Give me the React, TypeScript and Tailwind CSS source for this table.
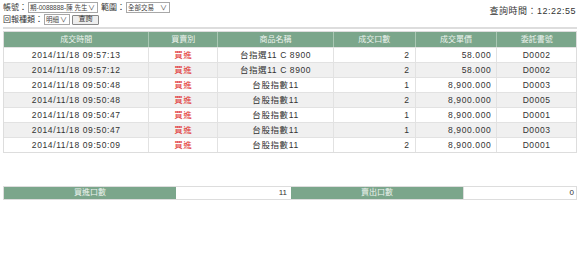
const rows = [
  ["2014/11/18 09:57:13", "買進", "台指選11 C 8900", "2", "58.000", "D0002"],
  ["2014/11/18 09:57:12", "買進", "台指選11 C 8900", "2", "58.000", "D0002"],
  ["2014/11/18 09:50:48", "買進", "台股指數11", "1", "8,900.000", "D0003"],
  ["2014/11/18 09:50:48", "買進", "台股指數11", "2", "8,900.000", "D0005"],
  ["2014/11/18 09:50:47", "買進", "台股指數11", "1", "8,900.000", "D0001"],
  ["2014/11/18 09:50:47", "買進", "台股指數11", "1", "8,900.000", "D0003"],
  ["2014/11/18 09:50:09", "買進", "台股指數11", "2", "8,900.000", "D0001"],
];

const heads = ["成交時間", "買賣別", "商品名稱", "成交口數", "成交單價", "委託書號"];
const widths = ["w-[145px]", "w-[69px]", "w-[116px]", "w-[82px]", "w-[82px]", "w-[80px]"];

function Sel({ text, w }: { text: string; w: string }) {
  return (
    <span className={`${w} h-[11px] border border-[#a8a8a8] bg-white flex items-center gap-[1px] pl-[1px] pr-[2px] text-[6.5px] text-[#444]`}>
      <span className="flex-1 min-w-0 whitespace-nowrap">{text}</span>
      <span className="text-[7px] leading-none">∨</span>
    </span>
  );
}

export default function App() {
  return (
    <div className="w-[580px] h-[254px] bg-white text-[#333] font-['Liberation_Sans','Noto_Sans_CJK_TC',sans-serif] text-[8px]">
      <div className="flex justify-between px-[3px] pt-[2px]">
        <div className="flex flex-col gap-[1px]">
          <div className="flex items-center gap-[1px] h-[11px]">
            <span>帳號：</span>
            <Sel text="期-0088888-陳 先生" w="w-[70px]" />
            <span className="ml-[2px]">範圍：</span>
            <Sel text="全部交易" w="w-[44px]" />
          </div>
          <div className="flex items-center gap-[1px] h-[11px]">
            <span>回報種類：</span>
            <Sel text="明細" w="w-[26px]" />
            <span className="ml-[1px] w-[27px] h-[10px] border border-[#888] bg-[#eee] rounded-[1px] flex items-center justify-center text-[7px]">查詢</span>
          </div>
        </div>
        <div className="pt-[3px] pr-[1px] text-[9px] tracking-[0.5px]">查詢時間：12:22:55</div>
      </div>
      <div className="mx-[3px] mt-[2px] h-[2px] bg-[#ddd]" />
      <div className="mx-[3px] mt-[2px] border border-[#ddd]">
        <div className="flex h-[15px] bg-[#7ba68b] text-[#eef4ef]">
          {heads.map((h, i) => (
            <div key={h} className={`${widths[i]} ${i ? "border-l border-[#a9c7b3]" : ""} flex items-center justify-center text-[8px]`}>{h}</div>
          ))}
        </div>
        {rows.map((r, ri) => (
          <div key={ri} className={`flex h-[15px] ${ri % 2 ? "bg-[#f0f0f0]" : "bg-white"} border-t border-[#e2e2e2]`}>
            {r.map((c, i) => (
              <div
                key={i}
                className={`${widths[i]} ${i ? "border-l border-[#e2e2e2]" : ""} flex items-center text-[8.5px] tracking-[0.6px] ${
                  i === 1 ? "justify-center text-[#e03030]" : i === 3 || i === 4 ? "justify-end pr-[5px]" : "justify-center"
                }`}
              >
                {c}
              </div>
            ))}
          </div>
        ))}
      </div>
      <div className="mx-[3px] mt-[33px] flex h-[14px] border border-[#ddd] text-[8px]">
        <div className="w-[172px] bg-[#7ba68b] text-[#eef4ef] flex items-center justify-center">買進口數</div>
        <div className="w-[115px] flex items-center justify-end pr-[4px]">11</div>
        <div className="w-[172px] bg-[#7ba68b] text-[#eef4ef] flex items-center justify-center">賣出口數</div>
        <div className="flex-1 border-l border-[#ddd] flex items-center justify-end pr-[2px]">0</div>
      </div>
    </div>
  );
}
